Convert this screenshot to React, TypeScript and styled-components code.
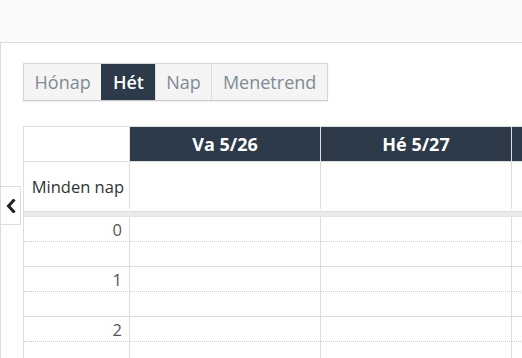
import React from "react";
import styled, { createGlobalStyle, css } from "styled-components";

const GlobalStyle = createGlobalStyle`
  html, body { margin: 0; padding: 0; background: #fff; }
  body { font-family: "Open Sans", "Noto Sans", sans-serif; font-size: 16px; color: #333; overflow: hidden; }
`;

const TopBar = styled.div`
  height: 42px;
  background: #fafafa;
  border-bottom: 1px solid #dddddd;
`;

const Content = styled.div`
  position: relative;
  border-left: 1px solid #dddddd;
  padding: 20px 0 0 22px;
  height: 315px;
  overflow: hidden;
`;

const ButtonGroup = styled.div`
  display: inline-flex;
  border: 1px solid #d6d6d6;
  border-bottom-color: #c8c8c8;
  box-shadow: 0 1px 2px rgba(0, 0, 0, 0.06);
  margin-bottom: 25px;
`;

const ViewButton = styled.button<{ $active?: boolean }>`
  font-family: inherit;
  font-size: 18px;
  height: 36px;
  padding: 0 10.6px;
  border: none;
  border-left: 1px solid #dddddd;
  background: #f4f4f4;
  color: #808a94;
  cursor: pointer;
  &:first-child { border-left: none; }
  ${(p) =>
    p.$active &&
    css`
      background: #2c3a4a;
      color: #ffffff;
      font-weight: 600;
      border-left-color: #2c3a4a;
    `}
`;

const Calendar = styled.div`
  display: grid;
  grid-template-columns: 106px 191px 191px 191px;
  border-top: 1px solid #dddddd;
  border-left: 1px solid #dddddd;
  width: max-content;
`;

const HeadCell = styled.div<{ $day?: boolean }>`
  height: 34px;
  border-right: 1px solid #dddddd;
  border-bottom: 1px solid #dddddd;
  display: flex;
  align-items: center;
  justify-content: center;
  font-size: 18px;
  font-weight: 700;
  color: #fff;
  background: ${(p) => (p.$day ? "#2c3a4a" : "#ffffff")};
`;

const AllDayCell = styled.div`
  height: 49px;
  display: flex;
  align-items: center;
  justify-content: flex-end;
  padding-right: 6px;
  font-size: 16.5px;
  color: #333;
  background: linear-gradient(#dddddd, #dddddd) right top / 1px 47px no-repeat;
`;

const Divider = styled.div`
  grid-column: 1 / -1;
  height: 4px;
  background: #ebebeb;
  border-top: 1px solid #dddddd;
  border-bottom: 1px solid #e4e4e4;
`;

const SlotCell = styled.div<{ $half?: boolean }>`
  height: 24px;
  border-right: 1px solid #dddddd;
  border-bottom: 1px ${(p) => (p.$half ? "dotted #cccccc" : "solid #dddddd")};
  display: flex;
  align-items: center;
  justify-content: flex-end;
  padding-right: 7px;
  font-size: 16.5px;
  color: #555;
`;

const NavButton = styled.div`
  position: absolute;
  left: -1px;
  top: 143px;
  width: 19px;
  height: 37px;
  border: 1px solid #dddddd;
  background: #fff;
  display: flex;
  align-items: center;
  justify-content: center;
`;

const days = ["Va 5/26", "Hé 5/27", ""];
const hours = [0, 1, 2];

export default function App() {
  return (
    <>
      <GlobalStyle />
      <TopBar />
      <Content>
        <ButtonGroup>
          <ViewButton>Hónap</ViewButton>
          <ViewButton $active>Hét</ViewButton>
          <ViewButton>Nap</ViewButton>
          <ViewButton>Menetrend</ViewButton>
        </ButtonGroup>
        <Calendar>
          <HeadCell />
          {days.map((d, i) => (
            <HeadCell key={i} $day>{d}</HeadCell>
          ))}
          <AllDayCell>Minden nap</AllDayCell>
          {days.map((_, i) => (
            <AllDayCell key={i} />
          ))}
          <Divider />
          {hours.map((h) => (
            <React.Fragment key={h}>
              <SlotCell $half>{h}</SlotCell>
              {days.map((_, i) => (
                <SlotCell key={i} $half />
              ))}
              <SlotCell />
              {days.map((_, i) => (
                <SlotCell key={i} />
              ))}
            </React.Fragment>
          ))}
        </Calendar>
        <NavButton>
          <svg width="10" height="14" viewBox="0 0 10 14">
            <path d="M7.5 1.5 L2.5 7 L7.5 12.5" fill="none" stroke="#222" strokeWidth="3" strokeLinecap="square" strokeLinejoin="miter" />
          </svg>
        </NavButton>
      </Content>
    </>
  );
}
